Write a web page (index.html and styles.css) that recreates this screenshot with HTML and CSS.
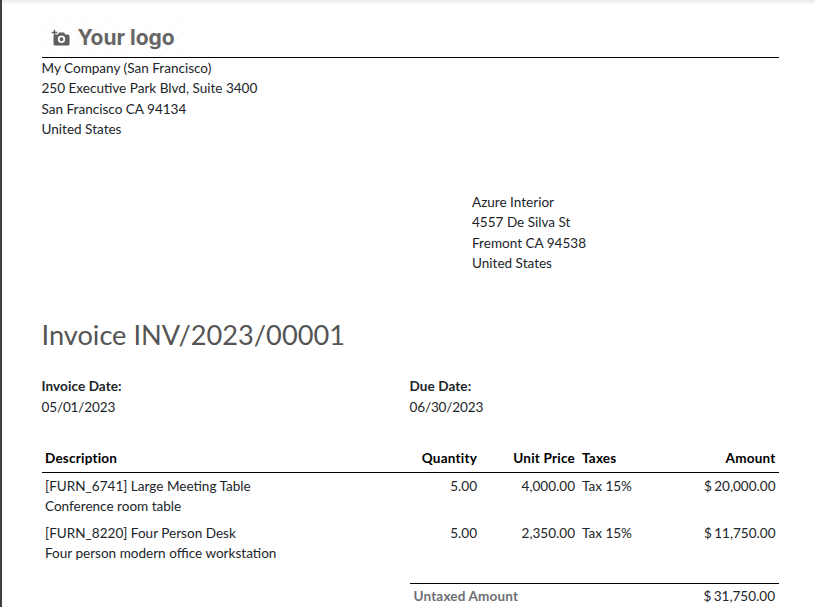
FILE: index.html
```html
<!DOCTYPE html>
<html lang="en">
<head>
<meta charset="utf-8">
<title>Invoice INV/2023/00001</title>
<link rel="stylesheet" href="styles.css">
</head>
<body>
<main class="page">
  <header class="head">
    <div class="logo">
      <svg class="logo-icon" viewBox="0 0 20 18" width="20" height="18" aria-hidden="true">
        <path class="cam" fill-rule="evenodd" d="M4 5.500h2.800l1-2h5.400l1 2H17a1.500 1.500 0 0 1 1.500 1.500v8a1.500 1.500 0 0 1-1.500 1.500H4A1.500 1.500 0 0 1 2.500 15V7A1.500 1.500 0 0 1 4 5.500Zm6.500 1a3.700 3.700 0 1 0 0 7.400 3.700 3.700 0 0 0 0-7.400Zm0 1.800a1.900 1.900 0 1 1 0 3.800 1.900 1.900 0 0 1 0-3.800Z"/>
        <path class="plus" d="M3.500 .7v5.600M.7 3.500h5.600"/>
      </svg>
      <span class="logo-text">Your logo</span>
    </div>
  </header>
  <address class="addr">
    <div>My Company (San Francisco)</div>
    <div>250 Executive Park Blvd, Suite 3400</div>
    <div>San Francisco CA 94134</div>
    <div>United States</div>
  </address>
  <address class="addr client">
    <div>Azure Interior</div>
    <div>4557 De Silva St</div>
    <div>Fremont CA 94538</div>
    <div>United States</div>
  </address>
  <h1 class="title">Invoice INV/2023/00001</h1>
  <div class="dates">
    <div class="date"><strong>Invoice Date:</strong><div class="digits">05/01/2023</div></div>
    <div class="date"><strong>Due Date:</strong><div class="digits">06/30/2023</div></div>
  </div>
  <table class="lines">
    <thead>
      <tr>
        <th class="c-desc">Description</th>
        <th class="c-qty num">Quantity</th>
        <th class="c-price num">Unit Price</th>
        <th class="c-tax">Taxes</th>
        <th class="c-amt num">Amount</th>
      </tr>
    </thead>
    <tbody>
      <tr>
        <td>[FURN_6741] Large Meeting Table<br>Conference room table</td>
        <td class="num">5.00</td>
        <td class="num">4,000.00</td>
        <td>Tax 15%</td>
        <td class="num money">$ 20,000.00</td>
      </tr>
      <tr>
        <td>[FURN_8220] Four Person Desk<br>Four person modern office workstation</td>
        <td class="num">5.00</td>
        <td class="num">2,350.00</td>
        <td>Tax 15%</td>
        <td class="num money">$ 11,750.00</td>
      </tr>
    </tbody>
  </table>
  <div class="totals">
    <div class="total-row"><strong class="total-label">Untaxed Amount</strong><span class="money">$ 31,750.00</span></div>
  </div>
</main>
</body>
</html>
```
FILE: styles.css
```css
html, body {
  margin: 0;
  height: 100%;
  overflow: hidden;
  background: #fff;
}
body {
  font-family: Lato, "Liberation Sans", sans-serif;
  font-size: 13.55px;
  line-height: 20.400px;
  color: #212529;
  border-left: 2px solid #3c3f44;
  box-sizing: border-box;
  background: linear-gradient(#e9e9e9, #fff 5px);
}
.page {
  padding: 0 36px 0 39.500px;
}
.head {
  padding-top: 18px;
  height: 39px;
  border-bottom: 1px solid #000;
}
.logo {
  display: flex;
  align-items: center;
  gap: 7px;
  width: 144px;
  height: 39px;
  padding-left: 9px;
  box-sizing: border-box;
  background: repeating-linear-gradient(-45deg, #fff 0 8px, #fcfcfc 8px 10px);
}
.logo-icon { flex: none; }
.cam { fill: #5f5f5f; }
.plus { stroke: #5f5f5f; stroke-width: 1.400; fill: none; }
.logo-text {
  font-family: Inter, sans-serif;
  font-weight: 700;
  font-size: 21px;
  line-height: 26px;
  color: #666;
}
.addr {
  font-style: normal;
}
.client {
  margin: 52.300px 0 0 430.500px;
}
.title {
  margin: 44px 0 0;
  font-weight: 400;
  font-size: 27.200px;
  line-height: 33px;
  color: #555;
}
.dates {
  display: flex;
  margin-top: 25.700px;
}
.date { width: 368px; }
.date strong { font-weight: 700; letter-spacing: .08px; }
.digits { letter-spacing: -.15px; }
.lines {
  width: 100%;
  margin-top: 27.300px;
  border-collapse: collapse;
  table-layout: fixed;
}
.lines th, .lines td {
  padding: 3px 3.500px;
  text-align: left;
  vertical-align: top;
}
.lines th {
  padding-top: 4px;
  font-weight: 700;
  color: #000;
  letter-spacing: .2px;
  border-bottom: 1px solid #000;
}
.lines .num { text-align: right; }
.lines .money { word-spacing: -1px; }
.c-desc { width: 368px; }
.c-qty { width: 57px; }
.c-price { width: 91px; }
.c-tax { width: 70px; }
.totals {
  margin: 17px 0 0 368px;
  border-top: 1px solid #000;
}
.total-row {
  display: flex;
  justify-content: space-between;
  padding: 1.500px 4px;
}
.total-label { color: #6c6f73; font-weight: 700; letter-spacing: .15px; }
.money { word-spacing: -1px; }
```
